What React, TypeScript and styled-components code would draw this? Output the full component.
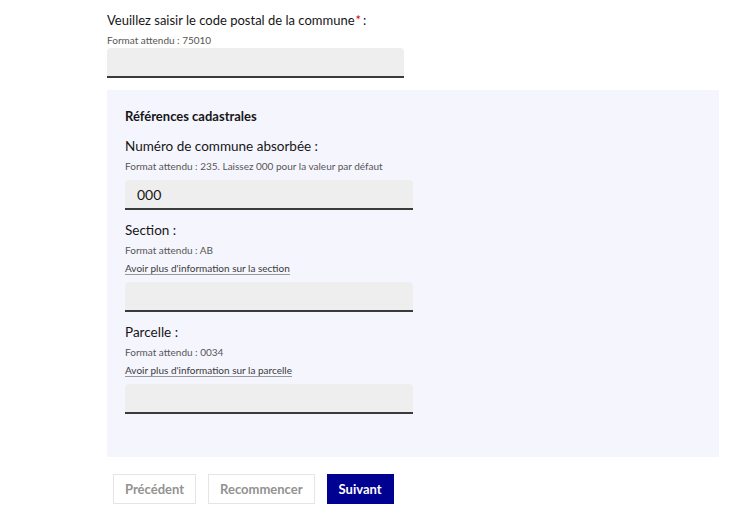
import React from "react";
import styled, { createGlobalStyle } from "styled-components";

const Global = createGlobalStyle`
  html, body { margin: 0; padding: 0; background: #fff; }
  body { font-family: Lato, "Open Sans", sans-serif; color: #161616; }
`;

const Page = styled.div`
  padding: 11px 32px 0 107px;
  display: flex;
  flex-direction: column;
`;

const Field = styled.div`
  display: flex;
  flex-direction: column;
`;

const Label = styled.label<{ $size?: number }>`
  font-size: ${(p) => p.$size ?? 13.5}px;
  line-height: 18px;
  color: #161616;
`;

const Star = styled.span`
  color: #ce0500;
  margin: 0 2px 0 1px;
`;

const Hint = styled.div`
  font-size: 10px;
  line-height: 12px;
  color: #555;
  margin-top: 5px;
`;

const HelpLink = styled.a`
  align-self: flex-start;
  font-size: 10px;
  line-height: 12px;
  color: #3a3a3a;
  text-decoration: none;
  border-bottom: 1px solid #999;
  margin-top: 6px;
`;

const Input = styled.input<{ $w: number; $gap: number }>`
  box-sizing: border-box;
  width: ${(p) => p.$w}px;
  height: 30px;
  margin-top: ${(p) => p.$gap}px;
  border: none;
  border-radius: 4px 4px 0 0;
  border-bottom: 2px solid #3a3a3a;
  background: #eeeeee;
  padding: 0 12px;
  font-family: inherit;
  font-size: 14px;
  color: #161616;
  outline: none;
`;

const Panel = styled.section`
  margin-top: 12px;
  width: 612px;
  box-sizing: border-box;
  background: #f5f5fe;
  padding: 18px 18px 43px;
  display: flex;
  flex-direction: column;
  gap: 11px;
`;

const PanelTitle = styled.h3`
  margin: 0 0 2px;
  font-size: 13px;
  line-height: 16px;
  font-weight: 700;
  color: #161616;
`;

const Buttons = styled.div`
  display: flex;
  gap: 12px;
  margin: 17px 0 0 6px;
`;

const Button = styled.button<{ $primary?: boolean }>`
  height: 30px;
  padding: 0 11px;
  font-family: inherit;
  font-size: 13px;
  font-weight: 700;
  border: 1px solid ${(p) => (p.$primary ? "#000091" : "#e5e5e5")};
  background: ${(p) => (p.$primary ? "#000091" : "#fff")};
  color: ${(p) => (p.$primary ? "#fff" : "#929292")};
  cursor: pointer;
`;

export default function App() {
  return (
    <>
      <Global />
      <Page>
        <Field>
          <Label $size={13}>
            Veuillez saisir le code postal de la commune<Star>*</Star>:
          </Label>
          <Hint>Format attendu : 75010</Hint>
          <Input $w={297} $gap={2} />
        </Field>
        <Panel>
          <PanelTitle>Références cadastrales</PanelTitle>
          <Field>
            <Label>Numéro de commune absorbée :</Label>
            <Hint>Format attendu : 235. Laissez 000 pour la valeur par défaut</Hint>
            <Input $w={288} $gap={8} defaultValue="000" />
          </Field>
          <Field>
            <Label>Section :</Label>
            <Hint>Format attendu : AB</Hint>
            <HelpLink href="#">Avoir plus d'information sur la section</HelpLink>
            <Input $w={288} $gap={7} />
          </Field>
          <Field>
            <Label>Parcelle :</Label>
            <Hint>Format attendu : 0034</Hint>
            <HelpLink href="#">Avoir plus d'information sur la parcelle</HelpLink>
            <Input $w={288} $gap={7} />
          </Field>
        </Panel>
        <Buttons>
          <Button>Précédent</Button>
          <Button>Recommencer</Button>
          <Button $primary>Suivant</Button>
        </Buttons>
      </Page>
    </>
  );
}
